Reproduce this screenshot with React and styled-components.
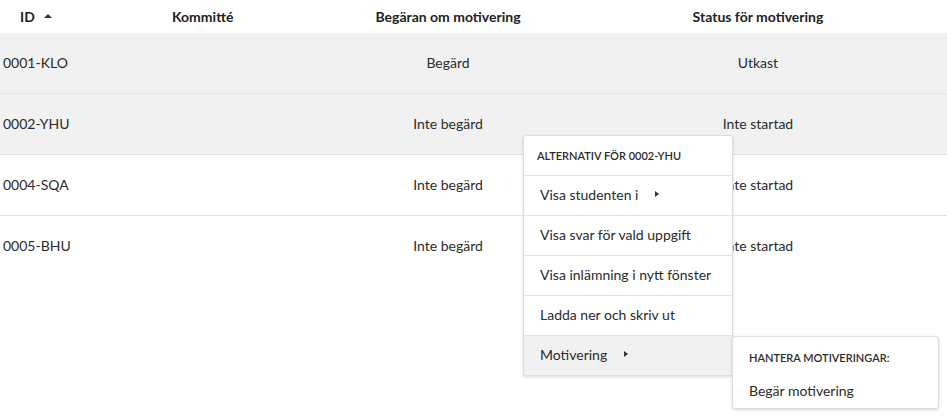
import React from "react";
import styled, { createGlobalStyle } from "styled-components";

const GlobalStyle = createGlobalStyle`
  html, body { margin: 0; padding: 0; background: #fff; }
  body { font-family: Lato, "Open Sans", "Liberation Sans", sans-serif; color: #2b2b2b; }
  * { box-sizing: border-box; }
`;

const Page = styled.div`
  position: relative;
  width: 947px;
  height: 419px;
  overflow: hidden;
  background: #fff;
`;

const COLS = "150px 140px 316px 304px 37px";

const HeaderRow = styled.div`
  display: grid;
  grid-template-columns: ${COLS};
  height: 33px;
  align-items: center;
  padding-bottom: 1px;
  font-size: 14px;
  font-weight: 700;
  color: #222;
`;

const HeadCell = styled.div`
  display: flex;
  align-items: center;
  justify-content: ${(p) => (p.$center ? "center" : "flex-start")};
  padding-left: ${(p) => p.$pl || 0}px;
  white-space: nowrap;
  overflow: hidden;
`;

const SortUp = styled.span`
  width: 0;
  height: 0;
  margin-left: 9px;
  border-left: 4px solid transparent;
  border-right: 4px solid transparent;
  border-bottom: 4px solid #333;
`;

const Marker = styled.span`
  display: block;
  width: 2px;
  height: 10px;
  margin-top: -12px;
  background: #fddb90;
`;

const Row = styled.div`
  display: grid;
  grid-template-columns: ${COLS};
  height: 61px;
  align-items: center;
  padding-bottom: 2px;
  font-size: 14px;
  color: #2b2b2b;
  background: ${(p) => (p.$shaded ? "#f1f1f1" : "#fff")};
  border-bottom: 1px solid ${(p) => (p.$last ? "transparent" : "#e3e3e3")};
`;

const Cell = styled.div`
  display: flex;
  justify-content: ${(p) => (p.$center ? "center" : "flex-start")};
  padding-left: ${(p) => p.$pl || 0}px;
  white-space: nowrap;
`;

const Menu = styled.div`
  position: absolute;
  left: 523px;
  top: 135px;
  width: 210px;
  background: #fff;
  border: 1px solid #dedede;
  border-radius: 3px;
  box-shadow: 0 1px 3px rgba(0, 0, 0, 0.16);
  z-index: 5;
`;

const MenuHeader = styled.div`
  height: 40px;
  display: flex;
  align-items: center;
  padding-left: 13px;
  font-size: 11px;
  font-weight: 600;
  color: #2b2b2b;
  border-bottom: 1px solid #e3e3e3;
  white-space: nowrap;
`;

const MenuItem = styled.div`
  position: relative;
  height: ${(p) => (p.$last ? 39 : 40)}px;
  display: flex;
  align-items: center;
  padding-left: 16px;
  padding-bottom: 2px;
  font-size: 14px;
  color: #2b2b2b;
  white-space: nowrap;
  background: ${(p) => (p.$active ? "#f1f1f1" : "#fff")};
  border-bottom: ${(p) => (p.$last ? "none" : "1px solid #e3e3e3")};
  border-radius: ${(p) => (p.$last ? "0 0 3px 3px" : "0")};
`;

const Caret = styled.span`
  width: 0;
  height: 0;
  margin-left: 17px;
  margin-top: -2px;
  border-top: 3.5px solid transparent;
  border-bottom: 3.5px solid transparent;
  border-left: 4px solid #333;
`;

const SubMenu = styled.div`
  position: absolute;
  left: 100%;
  top: 0;
  width: 207px;
  background: #fff;
  border: 1px solid #dedede;
  border-radius: 3px;
  box-shadow: 0 1px 3px rgba(0, 0, 0, 0.16);
`;

const SubHeader = styled.div`
  height: 39px;
  display: flex;
  align-items: center;
  padding-left: 16px;
  padding-top: 2px;
  font-size: 11px;
  font-weight: 600;
  color: #2b2b2b;
`;

const SubItem = styled.div`
  height: 32px;
  display: flex;
  align-items: center;
  padding-left: 16px;
  padding-bottom: 4px;
  font-size: 14px;
  color: #2b2b2b;
`;

const rows = [
  { id: "0001-KLO", req: "Begärd", status: "Utkast", shaded: true },
  { id: "0002-YHU", req: "Inte begärd", status: "Inte startad", shaded: true },
  { id: "0004-SQA", req: "Inte begärd", status: "Inte startad" },
  { id: "0005-BHU", req: "Inte begärd", status: "Inte startad" },
];

export default function App() {
  return (
    <Page>
      <GlobalStyle />
      <HeaderRow>
        <HeadCell $pl={20}>
          ID <SortUp />
        </HeadCell>
        <HeadCell $pl={22}>Kommitté</HeadCell>
        <HeadCell $center>Begäran om motivering</HeadCell>
        <HeadCell $center>Status för motivering</HeadCell>
        <HeadCell $pl={36}>
          <Marker />
        </HeadCell>
      </HeaderRow>
      {rows.map((r, i) => (
        <Row key={r.id} $shaded={r.shaded} $last={i === rows.length - 1}>
          <Cell $pl={3}>{r.id}</Cell>
          <Cell />
          <Cell $center>{r.req}</Cell>
          <Cell $center>{r.status}</Cell>
          <Cell />
        </Row>
      ))}
      <Menu>
        <MenuHeader>ALTERNATIV FÖR 0002-YHU</MenuHeader>
        <MenuItem>
          Visa studenten i <Caret />
        </MenuItem>
        <MenuItem>Visa svar för vald uppgift</MenuItem>
        <MenuItem>Visa inlämning i nytt fönster</MenuItem>
        <MenuItem>Ladda ner och skriv ut</MenuItem>
        <MenuItem $active $last>
          Motivering <Caret />
          <SubMenu>
            <SubHeader>HANTERA MOTIVERINGAR:</SubHeader>
            <SubItem>Begär motivering</SubItem>
          </SubMenu>
        </MenuItem>
      </Menu>
    </Page>
  );
}
